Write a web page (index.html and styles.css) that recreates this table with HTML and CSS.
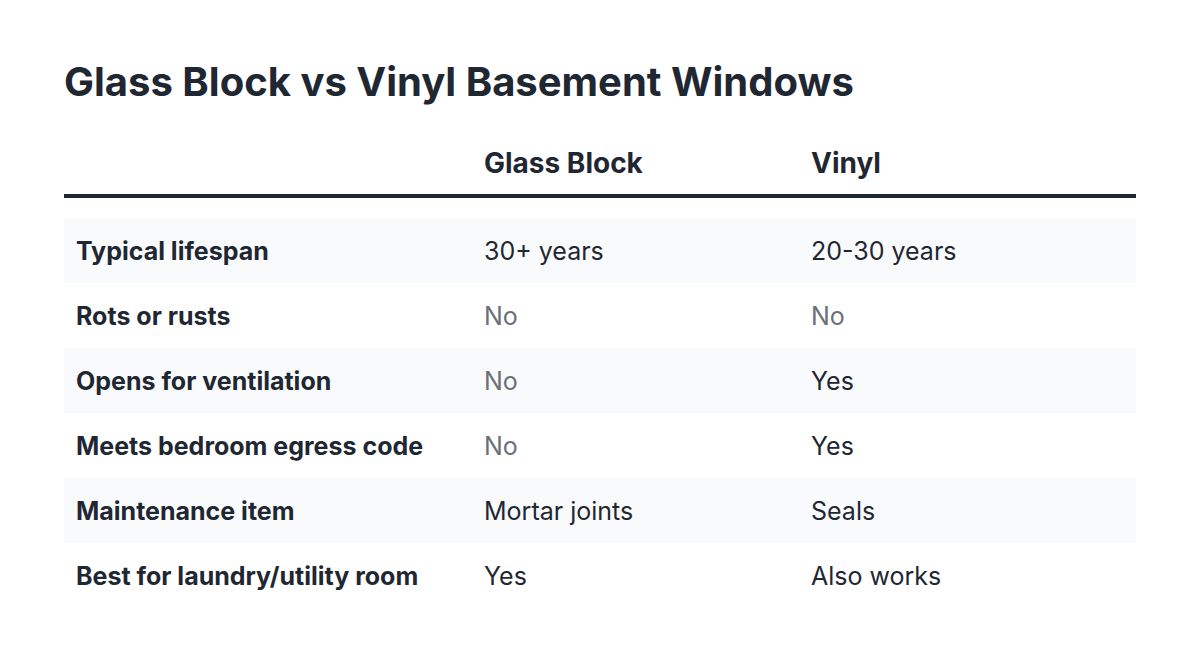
FILE: index.html
```html
<!DOCTYPE html>
<html lang="en">
<head>
<meta charset="utf-8">
<title>Glass Block vs Vinyl Basement Windows</title>
<link rel="stylesheet" href="styles.css">
</head>
<body>
<main class="page">
  <h1 class="title">Glass Block vs Vinyl Basement Windows</h1>
  <div class="table">
    <div class="head">
      <div class="cell c1"></div>
      <div class="cell c2">Glass Block</div>
      <div class="cell c3">Vinyl</div>
    </div>
    <div class="rows">
      <div class="row alt">
        <div class="cell c1 label">Typical lifespan</div>
        <div class="cell c2">30+ years</div>
        <div class="cell c3">20-30 years</div>
      </div>
      <div class="row">
        <div class="cell c1 label">Rots or rusts</div>
        <div class="cell c2 muted">No</div>
        <div class="cell c3 muted">No</div>
      </div>
      <div class="row alt">
        <div class="cell c1 label">Opens for ventilation</div>
        <div class="cell c2 muted">No</div>
        <div class="cell c3">Yes</div>
      </div>
      <div class="row">
        <div class="cell c1 label">Meets bedroom egress code</div>
        <div class="cell c2 muted">No</div>
        <div class="cell c3">Yes</div>
      </div>
      <div class="row alt">
        <div class="cell c1 label">Maintenance item</div>
        <div class="cell c2">Mortar joints</div>
        <div class="cell c3">Seals</div>
      </div>
      <div class="row">
        <div class="cell c1 label">Best for laundry/utility room</div>
        <div class="cell c2">Yes</div>
        <div class="cell c3">Also works</div>
      </div>
    </div>
  </div>
</main>
</body>
</html>
```
FILE: styles.css
```css
* { box-sizing: border-box; }
html, body { margin: 0; padding: 0; background: #ffffff; }
body {
  font-family: Inter, "Noto Sans", "Liberation Sans", sans-serif;
  color: #1f2733;
}
.page {
  padding: 58px 64px 0 64px;
}
.title {
  margin: 0;
  font-size: 40px;
  line-height: 48px;
  font-weight: 700;
  color: #1f2733;
}
.table {
  margin-top: 37px;
  width: 1072px;
}
.head {
  display: flex;
  border-bottom: 4px solid #1f2933;
  padding-bottom: 11px;
}
.head .cell {
  font-size: 28px;
  line-height: 40px;
  font-weight: 700;
}
.rows {
  margin-top: 20px;
  display: flex;
  flex-direction: column;
}
.row {
  display: flex;
  align-items: center;
  height: 65px;
}
.row.alt { background: #f9fafb; }
.cell {
  padding: 0 12px;
  font-size: 25px;
  line-height: 32px;
  color: #1f2733;
}
.c1 { width: 408px; }
.c2 { width: 327px; }
.c3 { flex: 1; }
.label { font-weight: 700; }
.muted { color: #6b7078; }
```
